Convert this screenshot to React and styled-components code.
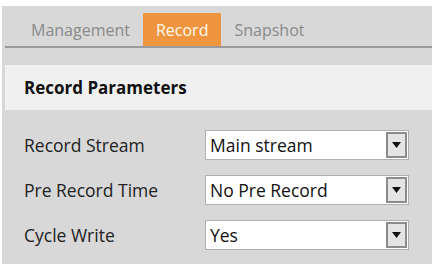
import React from 'react'
import styled, { createGlobalStyle } from 'styled-components'

const Global = createGlobalStyle`
  html, body {
    margin: 0;
    padding: 0;
    background: #ffffff;
    font-family: "Open Sans", "Noto Sans", sans-serif;
  }
`

const Page = styled.div`
  width: 435px;
  height: 267px;
  padding: 6px 3px 3px 2px;
  box-sizing: border-box;
`

const Frame = styled.div`
  background: #d8d8d8;
  height: 100%;
  display: flex;
  flex-direction: column;
`

const TabBar = styled.div`
  display: flex;
  align-items: flex-end;
  height: 40px;
  margin-left: 3px;
  border-bottom: 2px solid #9a9a9a;
  padding-left: 13px;
`

const Tab = styled.div`
  height: 33px;
  padding: 0 13px;
  display: flex;
  align-items: center;
  font-size: 16px;
  color: ${p => (p.active ? '#fff8ee' : '#8a8a8a')};
  background: ${p => (p.active ? '#f0953f' : 'transparent')};
`

const Section = styled.div`
  margin: 17px 0 0 3px;
  height: 45px;
  background: #f0f0f0;
  display: flex;
  align-items: center;
  padding-left: 19px;
  font-size: 17px;
  font-weight: 700;
  color: #111;
`

const Form = styled.div`
  display: flex;
  flex-direction: column;
  gap: 15px;
  padding: 20px 0 0 22px;
`

const Row = styled.div`
  display: flex;
  align-items: center;
  height: 30px;
`

const Label = styled.div`
  width: 181px;
  font-size: 17.5px;
  color: #222;
`

const Select = styled.div`
  width: 204px;
  height: 30px;
  box-sizing: border-box;
  border: 1px solid #b0b0b0;
  background: #fff;
  display: flex;
  align-items: center;
  justify-content: space-between;
  padding: 0 1px 0 4px;
  font-size: 17.5px;
  color: #111;
`

const Arrow = styled.div`
  width: 21px;
  height: 26px;
  box-sizing: border-box;
  border: 2px solid #8c8c8c;
  background: #e4e4e4;
  display: flex;
  align-items: center;
  justify-content: center;
`

const rows = [
  ['Record Stream', 'Main stream'],
  ['Pre Record Time', 'No Pre Record'],
  ['Cycle Write', 'Yes'],
]

export default function App() {
  return (
    <Page>
      <Global />
      <Frame>
        <TabBar>
          <Tab>Management</Tab>
          <Tab active>Record</Tab>
          <Tab>Snapshot</Tab>
        </TabBar>
        <Section>Record Parameters</Section>
        <Form>
          {rows.map(([label, value]) => (
            <Row key={label}>
              <Label>{label}</Label>
              <Select>
                {value}
                <Arrow>
                  <svg width="9" height="6" viewBox="0 0 9 6">
                    <path d="M0 0 H9 L4.5 6 Z" fill="#111" />
                  </svg>
                </Arrow>
              </Select>
            </Row>
          ))}
        </Form>
      </Frame>
    </Page>
  )
}
